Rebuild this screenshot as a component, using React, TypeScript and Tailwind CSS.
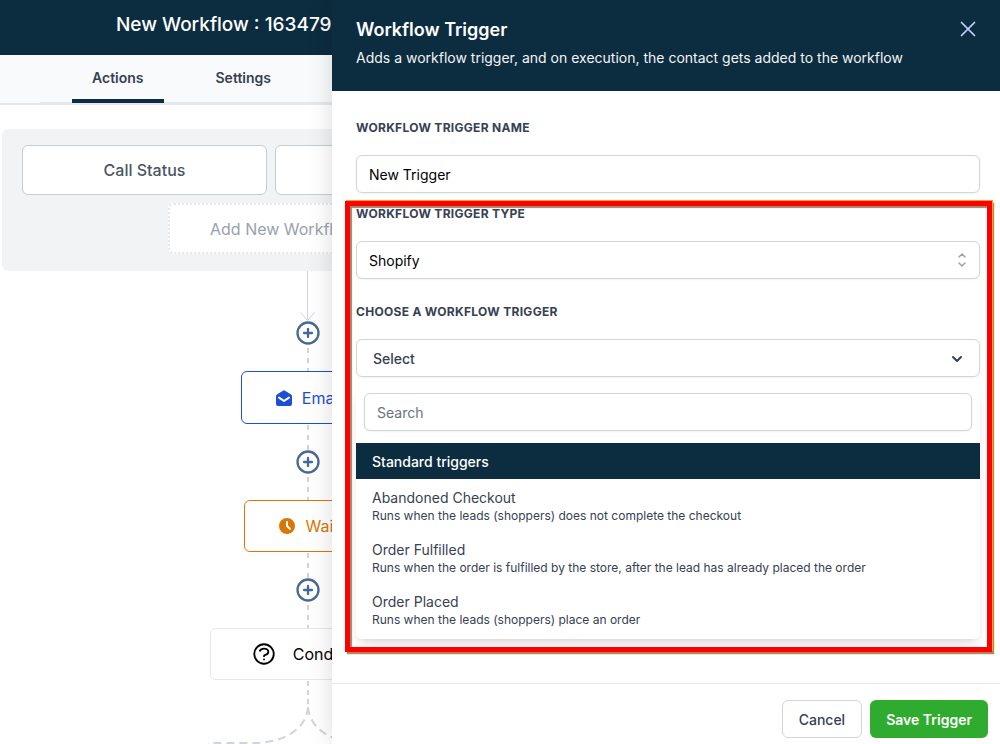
import { useState } from "react";
import { HiChevronDown, HiClock, HiMailOpen, HiOutlineQuestionMarkCircle } from "react-icons/hi";

const triggers = [
  {
    name: "Abandoned Checkout",
    description: "Runs when the leads (shoppers) does not complete the checkout",
  },
  {
    name: "Order Fulfilled",
    description: "Runs when the order is fulfilled by the store, after the lead has already placed the order",
  },
  {
    name: "Order Placed",
    description: "Runs when the leads (shoppers) place an order",
  },
];

const labelClass = "block pb-[19px] text-xs leading-4 font-bold tracking-wide text-gray-700 uppercase";
const fieldClass =
  "block w-full h-[38px] px-3 text-sm bg-white border border-gray-300 rounded-md shadow-xs outline-none";

function AddStep() {
  return (
    <button type="button" aria-label="Add step" className="block shrink-0">
      <svg className="w-6 h-[76px]" viewBox="0 0 24 76" fill="none">
        <path d="M12 1V26M12 53V76" stroke="#d1d5db" strokeWidth="2" strokeDasharray="5 5" />
        <circle cx="12" cy="38" r="10.5" stroke="#476a94" strokeWidth="2.3" />
        <path d="M12 34v8M8 38h8" stroke="#476a94" strokeWidth="2.3" strokeLinecap="round" />
      </svg>
    </button>
  );
}

function Canvas() {
  return (
    <div className="w-[612px] ml-0.5 mt-6 flex flex-col items-center whitespace-nowrap">
      <section className="w-full px-5 pt-4 pb-[17px] rounded-md bg-[#f2f3f5] flex flex-col items-center">
        <div className="w-full flex gap-2">
          <button type="button" className="w-[245px] h-[50px] bg-white border border-[#c3cdd2] rounded-md text-gray-600 font-medium">
            Call Status
          </button>
          <button type="button" aria-label="Trigger" className="w-[245px] h-[50px] bg-white border border-[#c3cdd2] rounded-md" />
        </div>
        <button type="button" className="w-[280px] h-[51px] mt-2 pl-10 text-left bg-white border-2 border-dotted border-gray-200 rounded-md text-gray-400">
          Add New Workflow Trigger
        </button>
      </section>

      <button type="button" aria-label="Add first step" className="block shrink-0">
        <svg className="w-6 h-[100px]" viewBox="0 0 24 100" fill="none">
          <path d="M11.5 0V50M4.5 41.5l7 8 7-8" stroke="#d1d5db" />
          <path d="M12 77V100" stroke="#d1d5db" strokeWidth="2" strokeDasharray="5 5" />
          <circle cx="12" cy="62" r="10.5" stroke="#476a94" strokeWidth="2.3" />
          <path d="M12 58v8M8 62h8" stroke="#476a94" strokeWidth="2.3" strokeLinecap="round" />
        </svg>
      </button>
      <button type="button" className="h-[53px] px-8 flex items-center gap-2 bg-white border border-[#1d4ed8] rounded-md text-[#1d4ed8]">
        <HiMailOpen className="w-5 h-5" />
        Email
      </button>
      <AddStep />
      <button type="button" className="h-[52px] px-8 flex items-center gap-2 bg-white border border-[#d97706] rounded-md text-[#d97706]">
        <HiClock className="w-5 h-[22px]" />
        Wait
      </button>
      <AddStep />
      <button type="button" className="h-[52px] px-10 flex items-center gap-4 bg-white border border-gray-200 rounded-md text-black">
        <HiOutlineQuestionMarkCircle className="w-[26px] h-[26px] [&_path]:stroke-[1.7]" />
        Condition
      </button>
      <svg className="w-[200px] h-16" viewBox="0 0 200 64" fill="none" stroke="#d1d5db" strokeWidth="2" strokeDasharray="8 5">
        <path d="M100 1V30" strokeDasharray="5 4" />
        <path d="M100 27C98 50 75 63 45 63H0" />
        <path d="M100 27C102 50 125 63 155 63H200" />
      </svg>
    </div>
  );
}

function TriggerDrawer() {
  const [name, setName] = useState("New Trigger");
  const [search, setSearch] = useState("");
  const [open, setOpen] = useState(true);

  const matches = triggers.filter((t) => t.name.toLowerCase().includes(search.toLowerCase()));

  return (
    <aside className="relative z-10 flex-1 min-w-0 flex flex-col bg-white shadow-[0_0_24px_rgba(0,0,0,0.14)]">
      <header className="flex items-start justify-between px-5 pl-6 pt-4 pb-[23px] bg-[#0c2c3f]">
        <div>
          <h2 className="text-lg leading-7 font-semibold text-white">Workflow Trigger</h2>
          <p className="mt-1 text-sm leading-5 text-gray-100">
            Adds a workflow trigger, and on execution, the contact gets added to the workflow
          </p>
        </div>
        <button type="button" aria-label="Close" className="mt-px text-indigo-200">
          <svg className="w-6 h-6" viewBox="0 0 24 24" fill="none" stroke="currentColor" strokeWidth="1.7">
            <path strokeLinecap="round" d="M5.5 5.5l13 13M18.5 5.5l-13 13" />
          </svg>
        </button>
      </header>

      <div className="flex-1 pl-6 pr-5 pt-[29px]">
        <label htmlFor="trigger-name" className={labelClass}>Workflow Trigger Name</label>
        <input
          id="trigger-name"
          type="text"
          value={name}
          onChange={(e) => setName(e.target.value)}
          className={`${fieldClass} text-black`}
        />

        <div className="relative mt-[13px]">
          <label htmlFor="trigger-type" className={labelClass}>Workflow Trigger Type</label>
          <div className="relative">
            <select id="trigger-type" defaultValue="Shopify" className={`${fieldClass} pt-0.5 appearance-none text-black`}>
              <option>Shopify</option>
            </select>
            <svg className="absolute right-2 top-[9px] w-5 h-5 pointer-events-none" viewBox="0 0 20 20" fill="none" stroke="#9ca3af" strokeWidth="1.5">
              <path strokeLinecap="round" strokeLinejoin="round" d="M7 7l3-3 3 3m0 6l-3 3-3-3" />
            </svg>
          </div>

          <label htmlFor="trigger" className={`${labelClass} mt-[25px]`}>Choose a Workflow Trigger</label>
          <button
            id="trigger"
            type="button"
            onClick={() => setOpen(!open)}
            className="flex items-center justify-between w-full h-[38px] pt-0.5 pl-4 pr-3 text-sm font-medium text-gray-700 border border-gray-300 rounded-md shadow-xs"
          >
            Select
            <HiChevronDown className="w-5 h-5" />
          </button>

          {open && (
            <div className="mt-2 pt-2 pb-[3px] rounded-md bg-white shadow-lg">
              <div className="px-2 pb-3">
                <input
                  type="text"
                  aria-label="Search"
                  placeholder="Search"
                  value={search}
                  onChange={(e) => setSearch(e.target.value)}
                  className={`${fieldClass} placeholder:text-gray-500`}
                />
              </div>
              <h3 className="px-4 pt-[9px] pb-[7px] mb-px text-sm leading-5 font-medium text-white bg-[#0c2c3f]">Standard triggers</h3>
              <ul>
                {matches.map((trigger) => (
                  <li key={trigger.name}>
                    <button type="button" className="block w-full px-4 py-2 text-left text-gray-700">
                      <span className="block text-sm leading-5">{trigger.name}</span>
                      <span className="block text-xs leading-4">{trigger.description}</span>
                    </button>
                  </li>
                ))}
              </ul>
            </div>
          )}

          {/* Highlight frame */}
          <div className="absolute -top-[5px] -bottom-[13px] -left-[11px] -right-3 pointer-events-none border-[5px] border-[#ff0000] shadow-[1px_-1px_0_#f9a01b,2px_2px_1px_#b5835a,inset_2px_2px_1px_#a08468]" />
        </div>
      </div>

      <footer className="flex justify-end gap-2 px-3 pt-4 pb-1.5 border-t border-gray-200">
        <button type="button" className="h-[38px] px-4 pt-0.5 text-sm font-medium text-gray-700 bg-white border border-gray-300 rounded-md">
          Cancel
        </button>
        <button type="button" className="h-[38px] px-4 pt-0.5 text-sm font-semibold text-white bg-[#2fac2f] rounded-md">
          Save Trigger
        </button>
      </footer>
    </aside>
  );
}

export default function App() {
  return (
    <div className="flex h-screen overflow-hidden bg-white font-['Inter',sans-serif]">
      <main className="w-[332px] shrink-0 overflow-hidden">
        <header className="h-[55px] pl-[116px] pt-[11px] bg-[#0c2c3f]">
          <h1 className="text-[19px] leading-7 font-medium text-white whitespace-nowrap">New Workflow : 1634790</h1>
        </header>
        <nav className="bg-gray-50 border-b-2 border-gray-200">
          <div className="h-12 ml-10 pl-8 flex gap-8 text-sm font-semibold text-gray-700 shadow-[inset_0_-1px_0_#e5e7eb]">
            <a href="#actions" className="px-5 pt-[13px] border-b-4 border-[#0c2c3f]">Actions</a>
            <a href="#settings" className="px-5 pt-[13px]">Settings</a>
          </div>
        </nav>
        <Canvas />
      </main>
      <TriggerDrawer />
    </div>
  );
}
